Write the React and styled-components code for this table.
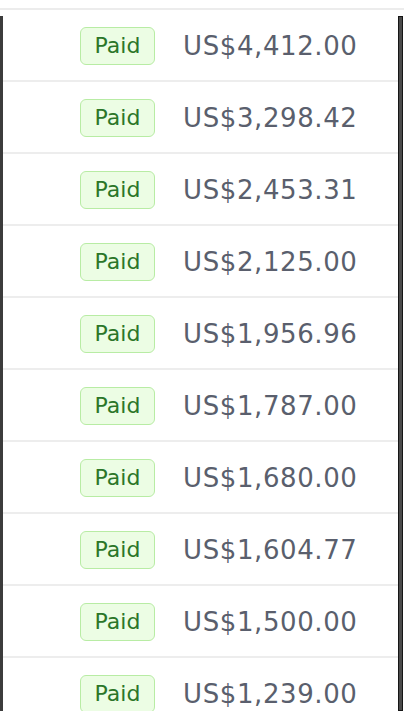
import React from 'react';
import styled, { createGlobalStyle } from 'styled-components';

const GlobalStyle = createGlobalStyle`
	html, body {
		margin: 0;
		padding: 0;
		background: #ffffff;
	}
	body {
		font-family: "DejaVu Sans", "Liberation Sans", Arial, sans-serif;
		overflow: hidden;
	}
`;

const Page = styled.div`
	width: 404px;
	height: 724px;
	padding-top: 8px;
	box-sizing: border-box;
	background: #ffffff;
`;

const TopRule = styled.div`
	height: 2px;
	background: #ececec;
`;

const Frame = styled.div`
	display: flex;
	height: 701px;
	overflow: hidden;
	padding-right: 1px;
`;

const Rail = styled.div`
	flex: none;
	width: ${props => props.width};
	margin-top: 6px;
	background: ${props => props.bg};
	border: ${props => props.border || 'none'};
	box-sizing: border-box;
`;

const List = styled.ul`
	flex: 1;
	list-style: none;
	margin: 0;
	padding: 0;
`;

const Row = styled.li`
	display: flex;
	align-items: center;
	justify-content: flex-end;
	gap: 28px;
	height: 72px;
	padding: 1px 41px 0 0;
	border-bottom: 2px solid #ededed;
	box-sizing: border-box;
`;

const Badge = styled.span`
	display: flex;
	align-items: center;
	justify-content: center;
	width: 75px;
	height: 38px;
	box-sizing: border-box;
	border: 1.5px solid #b8eca4;
	border-radius: 6px;
	background: #ecfde4;
	color: #2b7629;
	font-size: 22px;
	line-height: 1;
`;

const Amount = styled.span`
	width: 174px;
	text-align: right;
	color: #5a5f6d;
	font-size: 26px;
	line-height: 1;
	letter-spacing: 0.6px;
	white-space: nowrap;
`;

const payments = [
	'US$4,412.00',
	'US$3,298.42',
	'US$2,453.31',
	'US$2,125.00',
	'US$1,956.96',
	'US$1,787.00',
	'US$1,680.00',
	'US$1,604.77',
	'US$1,500.00',
	'US$1,239.00',
];

const App = () => {
	return (
		<Page>
			<GlobalStyle />
			<TopRule />
			<Frame>
				<Rail width="3px" bg="#3c3c3c" />
				<List>
					{payments.map(amount => (
						<Row key={amount}>
							<Badge>Paid</Badge>
							<Amount>{amount}</Amount>
						</Row>
					))}
				</List>
				<Rail width="5px" bg="#4a4a4a" border="1px solid #151515" />
			</Frame>
		</Page>
	);
};

export default App;
